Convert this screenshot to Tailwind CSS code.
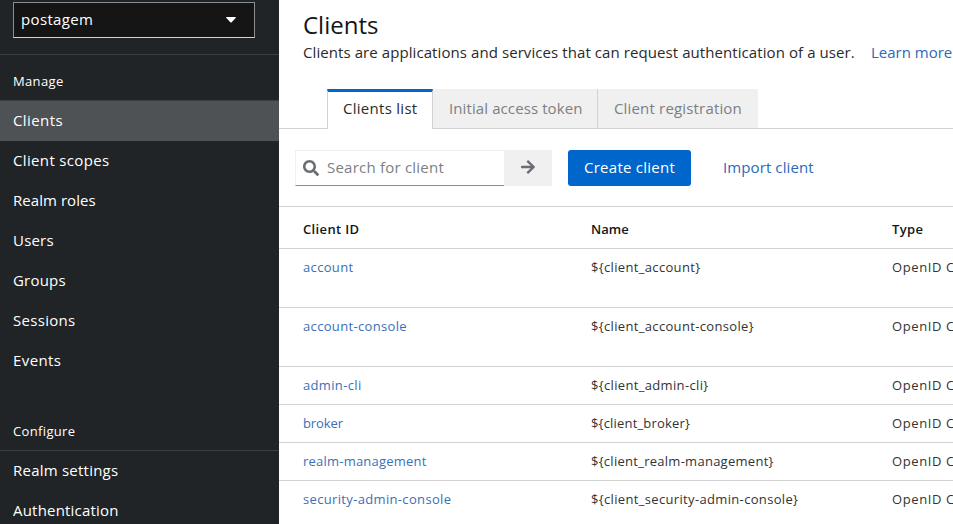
<!DOCTYPE html>
<html lang="en">
<head>
<meta charset="utf-8">
<title>Clients</title>
<script src="https://cdn.jsdelivr.net/npm/@tailwindcss/browser@4"></script>
</head>
<body class="flex h-[524px] w-[953px] overflow-hidden bg-white font-['Open_Sans','Noto_Sans',sans-serif] text-[#151515]">
<aside class="w-[279px] shrink-0 bg-[#212427] text-[15px] text-white">
  <div class="h-[55px] border-b border-[#3c3f42] px-[13px] pt-[2px]">
    <button class="flex h-9 w-[242px] items-center justify-between border border-[#8a8d90] border-b-[#d2d2d2] bg-[#151515] pr-[18px] pl-[7px]">
      <span class="pb-[2px] tracking-[.35px]">postagem</span>
      <svg class="h-[6px] w-[10px]" viewBox="0 0 10 6" fill="#fff"><path d="M.8 0h8.4q1.2 0 .4 1L5.7 5.2q-.7.7-1.4 0L.4 1Q-.4 0 .8 0z"/></svg>
    </button>
  </div>
  <nav>
    <h2 class="flex h-[46px] items-center border-b border-[#3c3f42] px-[13px] pt-[8px] text-[13px]"><span class="tracking-[.35px]">Manage</span></h2>
    <a class="flex h-10 items-center bg-[#4f5255] px-[13px] pb-[2px]"><span class="tracking-[.4px]">Clients</span></a>
    <a class="flex h-10 items-center px-[13px] pb-[2px]"><span class="tracking-[.35px]">Client scopes</span></a>
    <a class="flex h-10 items-center px-[13px] pb-[2px]"><span class="tracking-[.05px]">Realm roles</span></a>
    <a class="flex h-10 items-center px-[13px] pb-[2px]"><span class="tracking-[.2px]">Users</span></a>
    <a class="flex h-10 items-center px-[13px] pb-[2px]"><span class="tracking-[.2px]">Groups</span></a>
    <a class="flex h-10 items-center px-[13px] pb-[2px]"><span class="tracking-[.3px]">Sessions</span></a>
    <a class="flex h-10 items-center px-[13px] pb-[2px]"><span class="tracking-[.4px]">Events</span></a>
    <h2 class="mt-6 flex h-[46px] items-center border-b border-[#3c3f42] px-[13px] pt-[8px] text-[13px]"><span class="tracking-[.35px]">Configure</span></h2>
    <a class="flex h-10 items-center px-[13px] pb-[2px]"><span class="tracking-[.23px]">Realm settings</span></a>
    <a class="flex h-10 items-center px-[13px] pb-[2px]"><span class="tracking-[.2px]">Authentication</span></a>
  </nav>
</aside>
<main class="w-[674px] shrink-0 overflow-hidden whitespace-nowrap text-[15px] font-normal">
  <header class="h-[89px] pl-6 pt-[9px]">
    <h1 class="text-2xl leading-8">Clients</h1>
    <p class="-mt-px flex leading-6"><span class="w-[568px] tracking-[.08px] text-[#2a2a2a]">Clients are applications and services that can request authentication of a user.</span><a class="text-[#2b69ba]">Learn more</a></p>
  </header>
  <div class="flex h-10">
    <div class="w-12 border-b border-[#d2d2d2]"></div>
    <div class="w-[106px] border-x border-t-[3px] border-[#d2d2d2] border-t-[#0066cc] pt-[4px] pl-[15px] leading-6"><span class="tracking-[.28px] text-[#2a2a2a]">Clients list</span></div>
    <div class="w-[165px] border-r border-b border-[#d2d2d2] bg-[#f0f0f0] pt-[7px] pl-4 leading-6 text-[#7b7f83]"><span class="tracking-[.1px]">Initial access token</span></div>
    <div class="w-[160px] border-b border-[#d2d2d2] bg-[#f0f0f0] pt-[7px] pl-4 leading-6 text-[#7b7f83]"><span class="tracking-[.17px]">Client registration</span></div>
    <div class="grow border-b border-[#d2d2d2]"></div>
  </div>
  <div class="flex h-[77px] pt-[21px] pl-4">
    <div class="flex h-9 w-[209px] items-center border border-r-0 border-[#f0f0f0] border-b-[#8a8d90] pl-[7px] text-[#7b7f83]">
      <svg class="mr-2 mb-px h-4 w-4" viewBox="0 0 512 512" fill="#6a6e73"><path d="M505 442.7L405.3 343c-4.500-4.500-10.600-7-17-7H372c27.600-35.300 44-79.700 44-128C416 93.100 322.900 0 208 0S0 93.100 0 208s93.100 208 208 208c48.300 0 92.700-16.400 128-44v16.300c0 6.400 2.500 12.500 7 17l99.700 99.700c9.400 9.400 24.600 9.400 33.900 0l28.300-28.300c9.400-9.400 9.400-24.600.1-34zM208 336c-70.700 0-128-57.200-128-128 0-70.700 57.200-128 128-128 70.700 0 128 57.200 128 128 0 70.700-57.200 128-128 128z"/></svg>
      <span class="pb-[2px] tracking-[.22px]">Search for client</span>
    </div>
    <button class="mr-4 flex h-9 w-12 items-center justify-center bg-[#f0f0f0]">
      <svg class="mb-[2px] h-4 w-[14px]" viewBox="0 0 448 512" fill="#6a6e73"><path d="M190.500 66.900l22.200-22.200c9.400-9.400 24.600-9.400 33.900 0L441 239c9.400 9.400 9.400 24.600 0 33.900L246.600 467.300c-9.400 9.400-24.600 9.400-33.900 0l-22.200-22.200c-9.500-9.500-9.300-25 .4-34.300L311.400 296H24c-13.300 0-24-10.700-24-24v-32c0-13.300 10.700-24 24-24h287.400L190.900 101.200c-9.800-9.300-10-24.800-.4-34.300z"/></svg>
    </button>
    <button class="mr-8 flex h-9 w-[123px] items-center rounded-[3px] bg-[#0066cc] pl-4 pb-[2px] text-white"><span class="tracking-[.26px]">Create client</span></button>
    <a class="flex h-9 items-center pb-[2px] tracking-[.1px] text-[#2b69ba]">Import client</a>
  </div>
  <table class="w-[820px] table-fixed border-collapse text-[13px] leading-[21px]">
    <colgroup><col class="w-[312px]"><col class="w-[301px]"><col></colgroup>
    <thead class="text-left tracking-[.35px]">
      <tr class="h-[42px] border-y border-[#d2d2d2]"><th class="pt-[3px] pl-6 font-semibold">Client ID</th><th class="pt-[3px] font-semibold tracking-[0px]">Name</th><th class="pt-[3px] font-semibold">Type</th></tr>
    </thead>
    <tbody class="align-top tracking-[.34px] text-[#333333]">
      <tr class="h-[59px] border-b border-[#d2d2d2]"><td class="pt-2 pl-6 text-[#3a70b8]">account</td><td class="pt-2">${client_account}</td><td class="pt-2 tracking-[.6px]">OpenID Connect</td></tr>
      <tr class="h-[59px] border-b border-[#d2d2d2]"><td class="pt-2 pl-6 text-[#3a70b8]">account-console</td><td class="pt-2">${client_account-console}</td><td class="pt-2 tracking-[.6px]">OpenID Connect</td></tr>
      <tr class="h-[38px] border-b border-[#d2d2d2]"><td class="pt-2 pl-6 text-[#3a70b8]">admin-cli</td><td class="pt-2">${client_admin-cli}</td><td class="pt-2 tracking-[.6px]">OpenID Connect</td></tr>
      <tr class="h-[38px] border-b border-[#d2d2d2]"><td class="pt-2 pl-6 tracking-[-.1px] text-[#3a70b8]">broker</td><td class="pt-2 tracking-[.18px]">${client_broker}</td><td class="pt-2 tracking-[.6px]">OpenID Connect</td></tr>
      <tr class="h-[38px] border-b border-[#d2d2d2]"><td class="pt-2 pl-6 tracking-[.22px] text-[#3a70b8]">realm-management</td><td class="pt-2 tracking-[.27px]">${client_realm-management}</td><td class="pt-2 tracking-[.6px]">OpenID Connect</td></tr>
      <tr class="h-[50px]"><td class="pt-2 pl-6 text-[#3a70b8]">security-admin-console</td><td class="pt-2">${client_security-admin-console}</td><td class="pt-2 tracking-[.6px]">OpenID Connect</td></tr>
    </tbody>
  </table>
</main>
</body>
</html>
